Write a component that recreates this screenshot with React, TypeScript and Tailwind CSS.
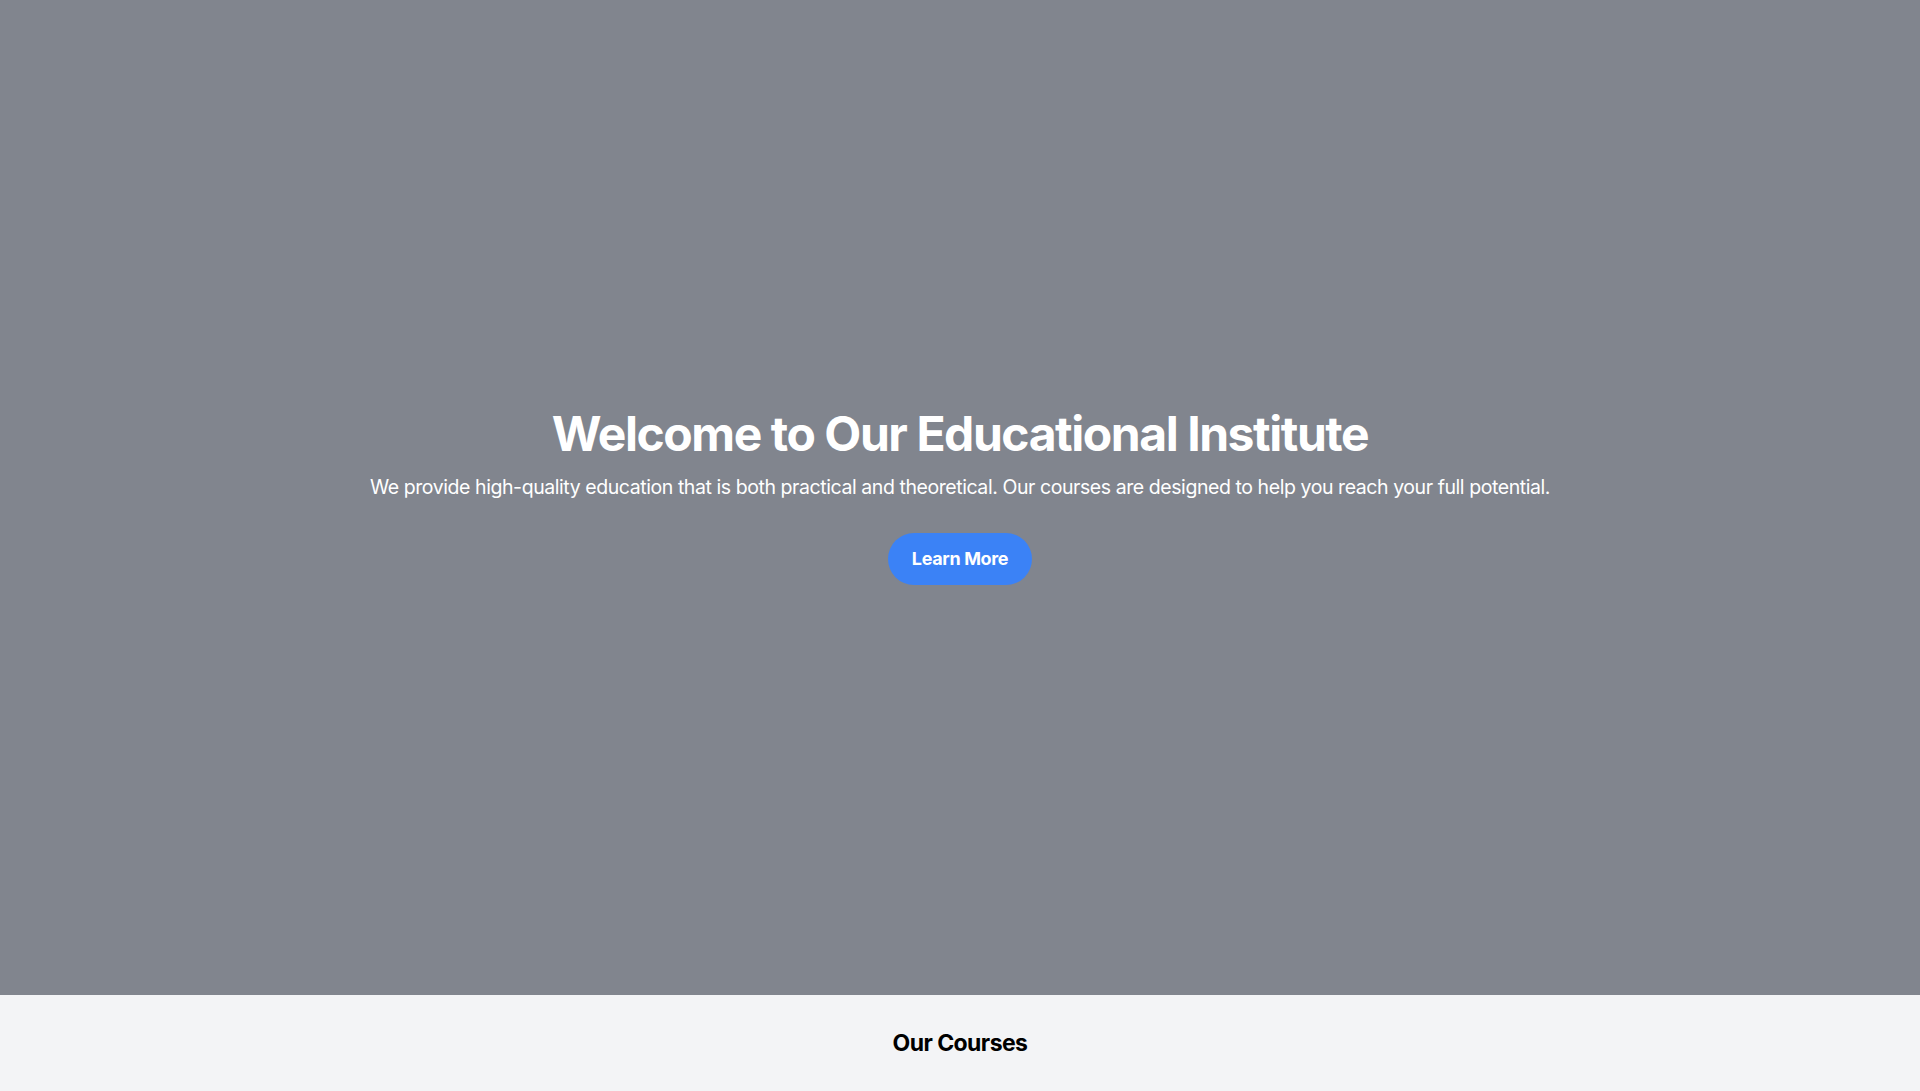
export default function App() {
  return (
    <div className="min-h-screen bg-[#f3f4f6]" style={{ fontFamily: 'Inter, "Noto Sans", sans-serif' }}>
      <section className="h-[995px] bg-[#81858e] flex flex-col items-center justify-center text-center text-white">
        <h1 className="text-5xl leading-none font-bold tracking-[-0.03em] mb-[15px]">Welcome to Our Educational Institute</h1>
        <p className="text-[19.5px] leading-7 tracking-[-0.022em]">
          We provide high-quality education that is both practical and theoretical. Our courses are designed to help you reach your full potential.
        </p>
        <button className="mt-8 px-6 py-3 rounded-full bg-[#3b82f6] text-white text-lg font-bold tracking-[-0.02em]">Learn More</button>
      </section>
      <section className="pt-8 pb-12 text-center">
        <h2 className="text-[23px] leading-8 font-bold tracking-[-0.025em] text-black">Our Courses</h2>
      </section>
    </div>
  );
}
